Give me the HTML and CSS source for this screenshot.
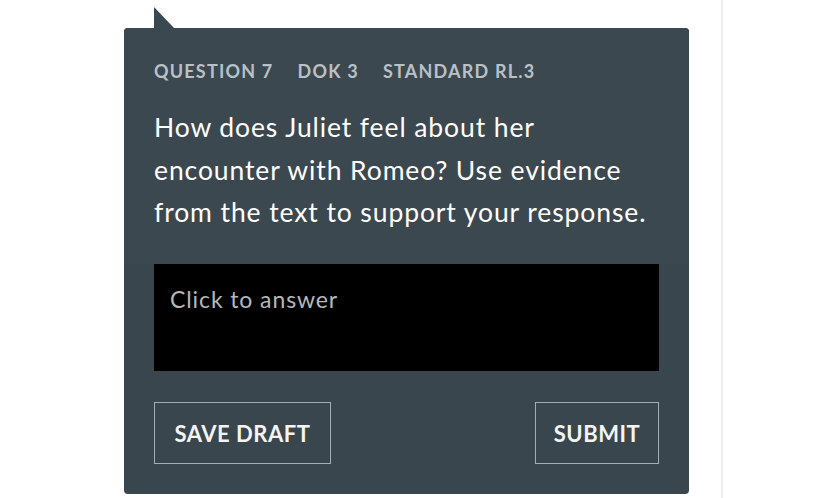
FILE: index.html
```html
<!DOCTYPE html>
<html>
<head>
<meta charset="utf-8">
<link rel="stylesheet" href="styles.css">
</head>
<body>
<div class="page">
  <div class="column">
    <div class="card">
      <div class="tail"></div>
      <div class="head">
        <div class="meta">
          <span>QUESTION 7</span>
          <span>DOK 3</span>
          <span>STANDARD RL.3</span>
        </div>
        <p class="question">How does Juliet feel about her<br>encounter with Romeo? Use evidence<br>from the text to support your response.</p>
      </div>
      <div class="answer">Click to answer</div>
      <div class="actions">
        <button class="btn btn-draft">SAVE DRAFT</button>
        <button class="btn btn-submit">SUBMIT</button>
      </div>
    </div>
  </div>
  <div class="rule"></div>
</div>
</body>
</html>
```
FILE: styles.css
```css
html, body {
  margin: 0;
  padding: 0;
  background: #ffffff;
}
body {
  font-family: "Lato", "Noto Sans", sans-serif;
}
.page {
  display: flex;
  height: 498px;
  overflow: hidden;
}
.column {
  width: 721px;
  padding: 28px 0 0 124px;
  box-sizing: border-box;
}
.rule {
  width: 2px;
  background: #ececec;
  height: 498px;
}
.card {
  position: relative;
  width: 565px;
  height: 466px;
  background: #3a464e;
  border-radius: 4px;
  box-sizing: border-box;
  display: flex;
  flex-direction: column;
}
.tail {
  position: absolute;
  left: 30px;
  top: -21px;
  width: 21px;
  height: 22px;
  background: #3c4850;
  clip-path: polygon(0 0, 100% 100%, 0 100%);
}
.head {
  background: #3c4850;
  border-radius: 4px 4px 0 0;
  padding: 33px 30px 0;
  height: 236px;
  box-sizing: border-box;
}
.meta {
  display: flex;
  gap: 24px;
  color: #b9c1c6;
  font-weight: 700;
  font-size: 18px;
  letter-spacing: 1.2px;
  line-height: 20px;
}
.question {
  margin: 25px 0 0;
  color: #ffffff;
  font-size: 26.5px;
  line-height: 42.5px;
  letter-spacing: 0.9px;
  white-space: nowrap;
}
.answer {
  margin: 0 30px;
  height: 107px;
  background: #000000;
  color: #b8b8b8;
  font-size: 23px;
  padding: 22px 16px;
  box-sizing: border-box;
  line-height: 26px;
  letter-spacing: 0.9px;
}
.actions {
  display: flex;
  justify-content: space-between;
  padding: 31px 30px 0;
}
.btn {
  height: 62px;
  background: transparent;
  border: 1.5px solid #a3adb3;
  color: #f4f4f4;
  font-family: "Lato", "Noto Sans", sans-serif;
  font-weight: 700;
  font-size: 22px;
  letter-spacing: 0.5px;
  padding: 0;
}
.btn-draft {
  width: 177px;
}
.btn-submit {
  width: 124px;
}
```
